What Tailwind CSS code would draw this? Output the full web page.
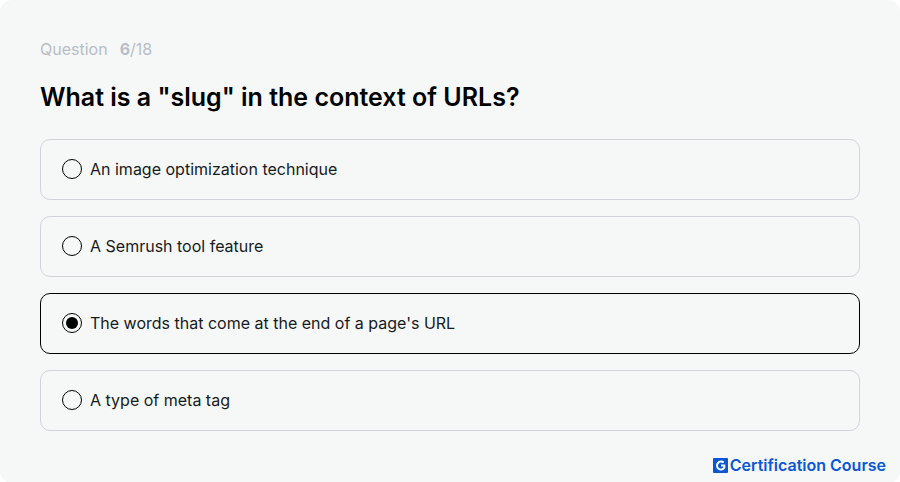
<!DOCTYPE html>
<html lang="en">
<head>
    <meta charset="UTF-8">
    <meta name="viewport" content="width=device-width, initial-scale=1.0">
    <title>Certification Course</title>
    <script src="https://cdn.jsdelivr.net/npm/@tailwindcss/browser@4"></script>
</head>
<body class="bg-white font-['Inter',sans-serif] text-base text-[#171a22]">
    <main class="min-h-screen rounded-xl bg-[#f5f8f7] px-10 pt-[37px] pb-2">
        <form>
            <!-- Progress -->
            <p class="flex gap-3 leading-6 text-[#b9bdc7]">
                <span>Question</span>
                <span><b class="font-bold">6</b>/18</span>
            </p>

            <fieldset>
                <legend class="pt-4 pb-[22px] text-[25px] leading-10 font-semibold text-black">What is a "slug" in the context of URLs?</legend>

                <!-- Answers -->
                <div class="flex flex-col gap-4">
                    <label class="flex items-center gap-2 rounded-[10px] border border-[#d1d4db] px-[21px] pt-[17px] pb-[18px] leading-6 has-checked:border-black">
                        <input type="radio" name="answer" class="size-5 appearance-none rounded-full border border-black bg-clip-content p-[3px] checked:bg-black">
                        An image optimization technique
                    </label>
                    <label class="flex items-center gap-2 rounded-[10px] border border-[#d1d4db] px-[21px] pt-[17px] pb-[18px] leading-6 has-checked:border-black">
                        <input type="radio" name="answer" class="size-5 appearance-none rounded-full border border-black bg-clip-content p-[3px] checked:bg-black">
                        A Semrush tool feature
                    </label>
                    <label class="flex items-center gap-2 rounded-[10px] border border-[#d1d4db] px-[21px] pt-[17px] pb-[18px] leading-6 has-checked:border-black">
                        <input type="radio" name="answer" checked class="size-5 appearance-none rounded-full border border-black bg-clip-content p-[3px] checked:bg-black">
                        The words that come at the end of a page's URL
                    </label>
                    <label class="flex items-center gap-2 rounded-[10px] border border-[#d1d4db] px-[21px] pt-[17px] pb-[18px] leading-6 has-checked:border-black">
                        <input type="radio" name="answer" class="size-5 appearance-none rounded-full border border-black bg-clip-content p-[3px] checked:bg-black">
                        A type of meta tag
                    </label>
                </div>
            </fieldset>
        </form>

        <!-- Brand -->
        <footer class="-mr-[26px] flex items-center justify-end gap-[2px] pt-6 text-base leading-5 font-semibold text-[#0a57d5]">
            <svg class="size-[15px]" viewBox="0 0 15 15" fill="none" aria-hidden="true">
                <rect width="15" height="15" rx="1" fill="#0a57d5"/>
                <path d="M10.7 4.6A4 4 0 1 0 11.3 9.8V7.6H8" stroke="#fff" stroke-width="2"/>
            </svg>
            <span>Certification Course</span>
        </footer>
    </main>
</body>
</html>
